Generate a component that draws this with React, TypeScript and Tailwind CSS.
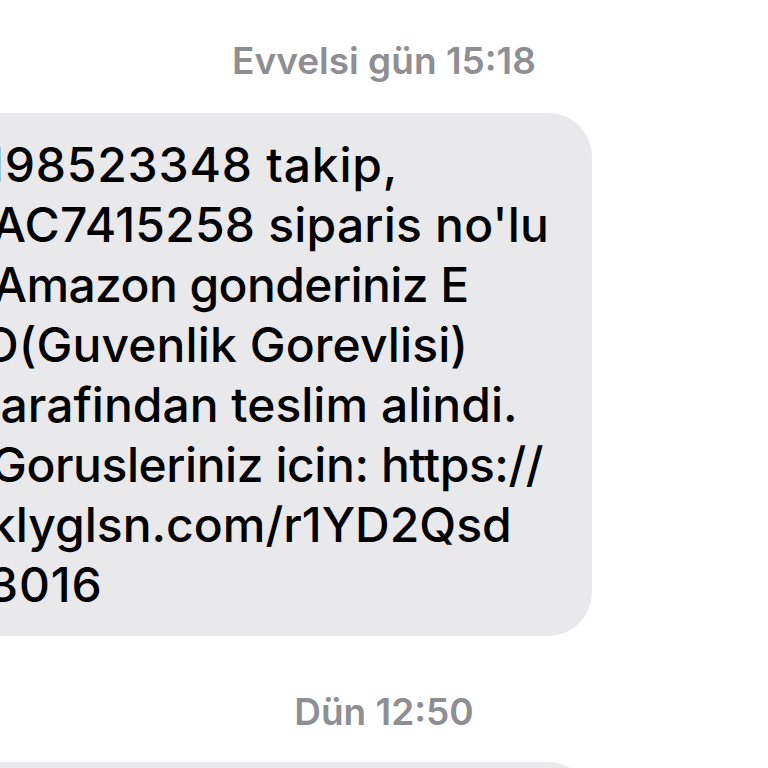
import React from "react";

const lines: { t: string; x: number; ls: number }[] = [
  { t: "198523348 takip,", x: -16, ls: 0.8 },
  { t: "AC7415258 siparis no'lu", x: -8, ls: 0.2 },
  { t: "Amazon gonderiniz E", x: -7, ls: -0.6 },
  { t: "D(Guvenlik Gorevlisi)", x: -16, ls: 0.1 },
  { t: "tarafindan teslim alindi.", x: -16, ls: 0 },
  { t: "Gorusleriniz icin: https://", x: -9, ls: -0.45 },
  { t: "klyglsn.com/r1YD2Qsd", x: -11, ls: 0 },
  { t: "3016", x: -12, ls: 0.8 },
];

export default function App() {
  return (
    <div
      className="w-[768px] h-[768px] overflow-hidden bg-white flex flex-col"
      style={{ fontFamily: "Inter, 'Noto Sans', sans-serif" }}
    >
      <div className="pt-[39px] text-center text-[37px] leading-[44px] font-semibold text-[#8e8e93]">
        Evvelsi gün 15:18
      </div>
      <div className="mt-[30px] ml-[-60px] w-[652px] rounded-[44px] bg-[#e9e9eb] pt-[22px] pb-[21px] text-black text-[48px] leading-[60px] font-medium">
        {lines.map((l, i) => (
          <div key={i} className="whitespace-nowrap h-[60px]">
            <span style={{ marginLeft: 60 + l.x, letterSpacing: l.ls }}>{l.t}</span>
          </div>
        ))}
      </div>
      <div className="mt-[54px] text-center text-[37px] leading-[44px] font-semibold text-[#8e8e93]">
        Dün 12:50
      </div>
      <div className="mt-[28px] ml-[-60px] w-[652px] h-[200px] shrink-0 rounded-[44px] bg-[#e9e9eb]"></div>
    </div>
  );
}
